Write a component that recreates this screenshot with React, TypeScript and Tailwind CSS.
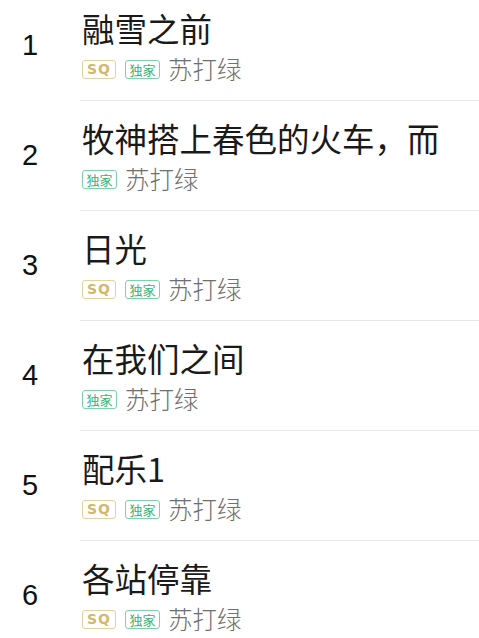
import React from 'react'

type Song = {
  title: string
  sq: boolean
}

const songs: Song[] = [
  { title: '融雪之前', sq: true },
  { title: '牧神搭上春色的火车，而', sq: false },
  { title: '日光', sq: true },
  { title: '在我们之间', sq: false },
  { title: '配乐1', sq: true },
  { title: '各站停靠', sq: true },
]

const cjk = 'font-["Noto_Sans_CJK_SC","Noto_Sans",sans-serif]'

function SqBadge() {
  return (
    <span className="flex h-[19px] w-[34px] items-center justify-center rounded-[3px] border border-[#e2d29f] font-['DejaVu_Sans',sans-serif] text-[14px] font-bold leading-none tracking-[1px] text-[#d2b86c]">
      SQ
    </span>
  )
}

function ExclusiveBadge() {
  return (
    <span
      className={`flex h-[19px] w-[35px] items-center justify-center rounded-[3px] border border-[#7fd0a8] ${cjk} text-[13px] leading-none text-[#36b377]`}
    >
      独家
    </span>
  )
}

function SongRow({ song, index }: { song: Song; index: number }) {
  return (
    <li className="flex h-[110px]">
      <div className="flex w-[80px] shrink-0 items-center pl-[14px]">
        <span className="w-[32px] text-center font-['Liberation_Sans',sans-serif] text-[29px] leading-none text-[#111]">
          {index + 1}
        </span>
      </div>
      <div className="min-w-0 flex-1 border-t border-[#e6e6e6] pl-[2px] pt-[17px]">
        <p className={`${cjk} whitespace-nowrap text-[32.5px] leading-[40px] text-[#1a1a1a]`}>{song.title}</p>
        <div className="mt-[7px] flex h-[28px] items-center">
          {song.sq ? (
            <span className="mr-[9px]">
              <SqBadge />
            </span>
          ) : null}
          <ExclusiveBadge />
          <span className={`ml-[8px] ${cjk} text-[24.5px] font-light leading-[28px] text-[#6f6f6f]`}>苏打绿</span>
        </div>
      </div>
    </li>
  )
}

export default function App() {
  return (
    <div className="h-[638px] w-[479px] overflow-hidden bg-white">
      <ul className="-mt-[10px]">
        {songs.map((song, i) => (
          <SongRow key={i} song={song} index={i} />
        ))}
      </ul>
    </div>
  )
}
